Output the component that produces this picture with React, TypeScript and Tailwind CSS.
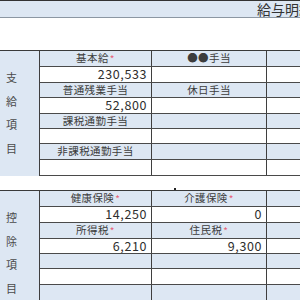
import React from "react";

type Row = {
  kind: "head" | "val";
  h: string;
  a?: string;
  b?: string;
  aMark?: boolean;
  bMark?: boolean;
};

const sectionOne: Row[] = [
  { kind: "head", h: "h-[16px]", a: "基本給", aMark: true, b: "●●手当" },
  { kind: "val", h: "h-[16px]", a: "230,533" },
  { kind: "head", h: "h-[15px]", a: "普通残業手当", b: "休日手当" },
  { kind: "val", h: "h-[16px]", a: "52,800" },
  { kind: "head", h: "h-[15px]", a: "課税通勤手当" },
  { kind: "val", h: "h-[15px]" },
  { kind: "head", h: "h-[16px]", a: "非課税通勤手当" },
  { kind: "val", h: "h-[16px]" },
];

const sectionTwo: Row[] = [
  { kind: "head", h: "h-[16px]", a: "健康保険", aMark: true, b: "介護保険", bMark: true },
  { kind: "val", h: "h-[16px]", a: "14,250", b: "0" },
  { kind: "head", h: "h-[16px]", a: "所得税", aMark: true, b: "住民税", bMark: true },
  { kind: "val", h: "h-[15px]", a: "6,210", b: "9,300" },
  { kind: "head", h: "h-[15px]" },
  { kind: "val", h: "h-[16px]" },
  { kind: "head", h: "h-[16px]" },
];

const Mark = () => <span className="text-[10px] text-[#e8607a] ml-[1px]">*</span>;

const Cell = ({ row, text, mark, width }: { row: Row; text?: string; mark?: boolean; width: string }) => (
  <div
    className={`${width} shrink-0 border-r border-[#3f3f3f] flex items-center ${
      row.kind === "head"
        ? "justify-center text-[10.5px] tracking-[0.4px] text-[#3c3c3c]"
        : "justify-end pr-[4px] text-[12.5px] tracking-[0.6px] text-[#2e2e2e]"
    }`}
  >
    {text}
    {mark && <Mark />}
  </div>
);

const Section = ({ labels, rows }: { labels: string[]; rows: Row[] }) => (
  <div className="flex border-t border-[#3a3a3a]">
    <div className="w-[40px] shrink-0 bg-[#dde7f3] border-r border-[#3f3f3f] pt-[15px] pl-[6px] flex flex-col text-[11px] leading-[23.5px] text-[#4a4a4a]">
      {labels.map((l) => (
        <span key={l}>{l}</span>
      ))}
    </div>
    <div className="flex-1 flex flex-col">
      {rows.map((row, i) => (
        <div
          key={i}
          className={`${row.h} flex border-b border-[#4a4a4a] leading-none ${
            row.kind === "head" ? "bg-[#dde7f3]" : "bg-white"
          }`}
        >
          <Cell row={row} text={row.a} mark={row.aMark} width="w-[112px]" />
          <Cell row={row} text={row.b} mark={row.bMark} width="w-[115px]" />
          <div className="flex-1" />
        </div>
      ))}
    </div>
  </div>
);

export default function App() {
  return (
    <div
      className="w-[300px] h-[300px] overflow-hidden bg-white text-[#333] relative"
      style={{ fontFamily: '"Noto Sans CJK JP", "Noto Sans", sans-serif' }}
    >
      <div className="border-t border-[#333] h-[18px] bg-[#dde7f3] border-b border-b-[#8c97a3] pl-[257px] whitespace-nowrap text-[14px] leading-[15px] pt-[1px] text-[#333]">
        給与明細書
      </div>
      <div className="h-[32px]" />
      <Section labels={["支", "給", "項", "目"]} rows={sectionOne} />
      <div className="h-[14px] relative">
        <span className="absolute left-[174px] top-[12px] w-[2px] h-[2px] bg-[#222]" />
      </div>
      <Section labels={["控", "除", "項", "目"]} rows={sectionTwo} />
    </div>
  );
}
